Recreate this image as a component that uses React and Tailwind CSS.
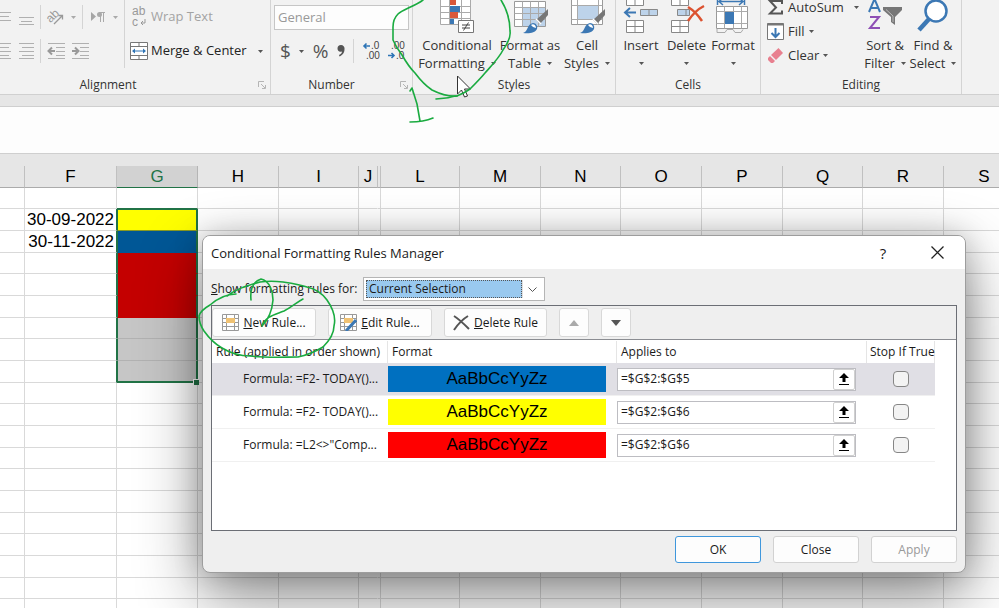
import React, { useState } from 'react';
import clsx from 'clsx';

const COLUMNS = [
  { name: '', width: 'w-[25px]' },
  { name: 'F', width: 'w-[92px]' },
  { name: 'G', width: 'w-[81px]' },
  { name: 'H', width: 'w-[81px]' },
  { name: 'I', width: 'w-[80px]' },
  { name: 'J', width: 'w-[19px]' },
  { name: '', width: 'w-[3px]' },
  { name: 'L', width: 'w-[79px]' },
  { name: 'M', width: 'w-[81px]' },
  { name: 'N', width: 'w-[80px]' },
  { name: 'O', width: 'w-[81px]' },
  { name: 'P', width: 'w-[81px]' },
  { name: 'Q', width: 'w-[80px]' },
  { name: 'R', width: 'w-[81px]' },
  { name: 'S', width: 'w-[81px]' },
];

const DATES = { 1: '30-09-2022', 2: '30-11-2022' };

// Fill of the selected G cells, by row index
const FILLS = {
  1: 'bg-[#ffff00] border-b-[#8a9a20]',
  2: 'bg-[#005796] border-b-[#005796]',
  3: 'bg-[#c40000] border-b-[#c40000]',
  4: 'bg-[#c40000] border-b-[#c40000]',
  5: 'bg-[#c40000] border-b-[#c40000]',
  6: 'bg-[#c6c6c6] border-b-[#b2b2b2]',
  7: 'bg-[#c6c6c6] border-b-[#b2b2b2]',
  8: 'bg-[#c6c6c6]',
};

const RULES = [
  { text: 'Formula: =F2- TODAY()...', color: 'bg-[#0070c0]', range: '=$G$2:$G$5' },
  { text: 'Formula: =F2- TODAY()...', color: 'bg-[#ffff00]', range: '=$G$2:$G$6' },
  { text: 'Formula: =L2<>"Comp...', color: 'bg-[#ff0000]', range: '=$G$2:$G$6' },
];

const Caret = ({ className = 'text-[#555]' }) => (
  <svg width="5" height="3" viewBox="0 0 5 3" className={clsx('shrink-0', className)}>
    <path d="M0 0h5L2.500 3z" fill="currentColor" />
  </svg>
);

const Lines = ({ rows }) => (
  <svg width="16" height="18" viewBox="0 0 16 18" className="shrink-0" stroke="#b0b0b0">
    {rows.map(([y, x1, x2]) => (
      <path key={y} d={`M${x1} ${y}H${x2}`} />
    ))}
  </svg>
);

const IndentIcon = ({ right }) => (
  <svg width="18" height="18" viewBox="0 0 18 18" className="shrink-0" stroke="#b0b0b0" fill="none">
    <path d="M1 1.500h17M9 5.500h9M9 9.500h9M9 13.500h9M1 16.500h17" />
    {right
      ? <path d="M1 9h5M4 5.500L7.500 9 4 12.500" stroke="#999" strokeWidth="2" />
      : <path d="M2 9h6M5 5.500L1.500 9 5 12.500" stroke="#999" strokeWidth="2" />}
  </svg>
);

const OrientationIcon = () => (
  <svg width="18" height="18" viewBox="0 0 18 18" className="shrink-0 overflow-visible">
    <text x="0" y="11" fontSize="12" fill="#999" fontFamily="Liberation Sans, sans-serif" transform="rotate(-45 7 9)">ab</text>
    <path d="M7 16L15 8M15.500 11.500V7.500H11.500" stroke="#999" strokeWidth="1.300" fill="none" />
  </svg>
);

const DirectionIcon = () => (
  <svg width="18" height="18" viewBox="0 0 18 18" className="shrink-0">
    <path d="M2 4l5 4.500L2 13z" fill="#a6a6a6" />
    <path d="M11.500 4v10M14.500 4v10M10 4.500h6" stroke="#aaa" fill="none" />
    <circle cx="10.500" cy="6.500" r="2.500" fill="#aaa" />
  </svg>
);

const WrapIcon = () => (
  <svg width="18" height="20" viewBox="0 0 18 20" className="shrink-0 overflow-visible" fontFamily="Liberation Sans, sans-serif" fontSize="12" fill="#999">
    <text x="2" y="8">ab</text>
    <text x="2" y="19">c</text>
    <path d="M15 12v4h-4M13 14l-2 2 2 2" stroke="#999" fill="none" />
  </svg>
);

const MergeIcon = () => (
  <svg width="18" height="18" viewBox="0 0 18 18" className="shrink-0" fill="none">
    <path d="M.5.5h17v17H.5zM.5 4.500h17M.5 13.500h17M9 .5v4M9 13.500v4" fill="#fff" stroke="#777" />
    <path d="M3 9h12" stroke="#2e75b6" />
    <path d="M5 6.500v5L2 9zM13 6.500v5L16 9z" fill="#2e75b6" />
  </svg>
);

const DecimalIcon = ({ decrease }) => (
  <svg width="17" height="18" viewBox="0 0 17 18" className="shrink-0 overflow-visible" fontFamily="Liberation Sans, sans-serif" fontSize="10" fill="#444">
    {decrease ? (
      <>
        <text x="3" y="7">.00</text>
        <text x="8" y="17">.0</text>
        <path d="M0 13.500h6M3.500 11L6 13.500 3.500 16" stroke="#2e75b6" strokeWidth="1.600" fill="none" />
      </>
    ) : (
      <>
        <text x="8" y="7">.0</text>
        <text x="3" y="17">.00</text>
        <path d="M7 4H1M3.500 1.500L1 4 3.500 6.500" stroke="#2e75b6" strokeWidth="1.600" fill="none" />
      </>
    )}
  </svg>
);

const ConditionalIcon = () => (
  <svg width="36" height="34" viewBox="0 0 36 34">
    <path d="M1.500-6v30.500h30V-6M1.500 6.500h30M1.500 12.500h30M1.500 18.500h30M10.500 0v24M22.500 0v24" fill="#fff" stroke="#aaa" />
    <path d="M11 0h6v5h-6zM11 12h8v6h-8z" fill="#d9583a" />
    <path d="M11 6h10v6H11zM11 19h4v5h-4z" fill="#3c78b4" />
    <path d="M19.500 20.500h15v12h-15z" fill="#fff" stroke="#777" />
    <path d="M23 25h8M23 28h8M29.500 22.500l-5 8" stroke="#444" fill="none" />
  </svg>
);

const Brush = () => (
  <>
    <path d="M34 9v6l-8 9-4-4z" fill="#777" />
    <path d="M22 19l5 5" stroke="#fff" strokeWidth="1.500" />
    <path d="M9 33c5-1 4-9 10-10 3 0 5 3 4 6-2 4-8 5-14 4z" fill="#3c78b4" />
    <path d="M17 25c2-2 5 0 5 3l-3-1z" fill="#fff" />
  </>
);

const TableIcon = () => (
  <svg width="36" height="34" viewBox="-2 0 36 34">
    <path d="M.5 1.500h31v25H.5z" fill="#fff" stroke="#999" />
    <path d="M9 8h22v18H9z" fill="#bdd3ea" />
    <path d="M.5 7.500h31M.5 13.500h31M.5 19.500h31M8.500 1.500v25M16.500 1.500v25M24.500 1.500v25" stroke="#aaa" fill="none" />
    <Brush />
  </svg>
);

const CellIcon = () => (
  <svg width="36" height="34" viewBox="-2 0 36 34">
    <path d="M.5-4v28.500h31V-4" fill="#fff" stroke="#999" />
    <path d="M7 6h20v13H7z" fill="#bdd3ea" />
    <path d="M.5 5.500h31M.5 19.500h31M6.500 0v24.500M27.500 0v24.500" stroke="#aaa" fill="none" />
    <Brush />
  </svg>
);

const InsertIcon = () => (
  <svg width="36" height="34" viewBox="0 0 36 34" fill="none">
    <path d="M3.500-3v8.500h17V-3M12 0v5.500M3.500 20.500h17v12h-17zM12 20.500v12M3.500 26.500h17" fill="#fff" stroke="#888" />
    <path d="M17.500 9.500h17v6h-17zM26 9.500v6" fill="#bdd3ea" stroke="#888" />
    <path d="M13 12.500H2M7 8l-5 4.500L7 17" stroke="#3c78b4" strokeWidth="2" />
  </svg>
);

const DeleteIcon = () => (
  <svg width="36" height="34" viewBox="0 0 36 34" fill="none">
    <path d="M2.500-3v8.500h17V-3M11 0v5.500M2.500 20.500h17v12h-17zM11 20.500v12M2.500 26.500h17" fill="#fff" stroke="#888" />
    <path d="M8.500 9.500h12v6h-12zM17 9.500v6" fill="#bdd3ea" stroke="#888" />
    <path d="M19 7c5 3 10 8 14 14M35 6c-6 3-12 9-16 15" stroke="#dc5230" strokeWidth="2.500" />
  </svg>
);

const FormatIcon = () => (
  <svg width="36" height="34" viewBox="0 0 36 34" fill="none">
    <path d="M4 1.500h24M8-2L4 1.500 8 5M24-2l4 3.500L24 5M2.500 0v5M29.500 0v5" stroke="#3c78b4" strokeWidth="1.500" />
    <path d="M1.500 6.500h31v22h-31z" fill="#fff" stroke="#999" />
    <path d="M1.500 11.500h31M1.500 23.500h31M9.500 6.500v22M18.500 6.500v5M18.500 23.500v5M26.500 6.500v22M2 29v3.500h8l2-3h6l2 3h6l2-3" stroke="#aaa" />
    <path d="M10 12h9v12h-9z" fill="#3c78b4" />
  </svg>
);

const SortIcon = () => (
  <svg width="36" height="34" viewBox="0 0 36 34" fill="none">
    <path d="M2 12L7.500-1 13 12M4 8h7" stroke="#3c78b4" strokeWidth="2" />
    <path d="M3 17h9L3 28h10" stroke="#8e4fb5" strokeWidth="2" />
    <path d="M16 7h19v3l-7 7v8l-4-3v-5l-8-7z" fill="#777" />
    <path d="M19 9.500l7 6.500v6" stroke="#bbb" />
  </svg>
);

const FindIcon = () => (
  <svg width="36" height="34" viewBox="0 0 36 34">
    <path d="M14 19L4 30" stroke="#3c78b4" strokeWidth="4.500" />
    <circle cx="21" cy="11" r="10.500" fill="#fff" stroke="#3c78b4" strokeWidth="2.500" />
  </svg>
);

const SumIcon = () => (
  <svg width="17" height="17" viewBox="0 0 17 17">
    <path d="M15 5V2H3l6 6.500-6 6h12v-3" fill="none" stroke="#555" strokeWidth="2" />
  </svg>
);

const FillIcon = () => (
  <svg width="17" height="17" viewBox="0 0 17 17">
    <path d="M.5.500h16v16H.5z" fill="#fff" stroke="#777" />
    <path d="M.5 1.500h16" stroke="#777" strokeWidth="2" />
    <path d="M8.500 5v9M4.500 10l4 4 4-4" fill="none" stroke="#3c78b4" strokeWidth="2" />
  </svg>
);

const EraserIcon = () => (
  <svg width="17" height="17" viewBox="0 0 17 17">
    <path d="M11.500 1l4.500 5-7 7-5-5z" fill="#e8808f" />
    <path d="M3 9l5 5-2 2H4l-3-3v-2z" fill="#e8808f" />
  </svg>
);

const LauncherIcon = () => (
  <svg width="8" height="8" viewBox="0 0 8 8" fill="none" stroke="#b5b5b5">
    <path d="M.5 6V.5H6M3 3l4 4M7.500 4v3.500H4" />
  </svg>
);

const RuleIcon = ({ pencil }) => (
  <svg width="17" height="17" viewBox="0 0 17 17" fill="none">
    <path d="M.5.500h16v16H.5zM.5 4.500h16M.5 8.500h16M.5 12.500h16M4.500.5v16M12.500.5v16" fill="#fff" stroke="#999" />
    <path d="M4 4h9v5H4z" fill="#f0c273" />
    {pencil && <path d="M6 17L16 6" stroke="#3c78b4" strokeWidth="3" />}
  </svg>
);

const RibbonGroup = ({ label, launcher, className, labelClassName, children }) => (
  <section className={clsx('flex shrink-0 flex-col border-r border-[#d4d4d4]', className)} aria-label={label}>
    <div className="flex h-[76px]">{children}</div>
    <div className="flex h-[18px] items-center px-1 text-[12px] leading-[18px] text-[#333]">
      <span className="w-2" />
      <span className={clsx('flex-1 text-center', labelClassName)}>{label}</span>
      <span className="w-2">{launcher && <LauncherIcon />}</span>
    </div>
  </section>
);

const BigButton = ({ icon, first, second, className }) => (
  <button className={clsx('flex shrink-0 flex-col items-center whitespace-nowrap text-[13px] leading-[18px] text-[#333]', className)}>
    <span className="flex h-9 items-start">{icon}</span>
    <span>{first}</span>
    <span className="flex h-[18px] items-center gap-1.5">
      {second}
      <Caret />
    </span>
  </button>
);

const SmallButton = ({ icon, label, gap }) => (
  <button className="flex h-6 items-center gap-1 whitespace-nowrap text-[13px] leading-4 text-[#333]">
    {icon}
    <span>{label}</span>
    <Caret className={clsx('text-[#555]', gap)} />
  </button>
);

const Separator = () => <span className="h-6 w-px shrink-0 bg-[#d4d4d4]" />;

const Ribbon = () => (
  <header className="flex h-[95px] overflow-hidden border-b border-[#d0d0d0] bg-[#f2f2f2]">
    <RibbonGroup label="Alignment" launcher className="-ml-[54px] w-[325px]">
      <div className="ml-[50px] flex h-[68px] flex-col border-r border-[#d4d4d4] pr-1.5">
        <div className="flex h-[34px] items-center gap-1.5">
          <Lines rows={[[4.5, 0, 15], [8.5, 2, 13], [12.5, 0, 15]]} />
          <Lines rows={[[9.5, 1, 16], [13.5, 3, 14], [16.5, 1, 16]]} />
          <Separator />
          <OrientationIcon />
          <Caret className="text-[#aaa]" />
          <Separator />
          <DirectionIcon />
          <Caret className="text-[#aaa]" />
        </div>
        <div className="flex h-[34px] items-center gap-1.5">
          <Lines rows={[[1.5, 0, 15], [5.5, 2, 13], [9.5, 0, 15], [13.5, 2, 13], [16.5, 0, 15]]} />
          <Lines rows={[[1.5, 1, 16], [5.5, 4, 16], [9.5, 1, 16], [13.5, 4, 16], [16.5, 1, 16]]} />
          <Separator />
          <IndentIcon />
          <IndentIcon right />
        </div>
      </div>
      <div className="ml-[5px] flex flex-col text-[13px]">
        <button className="flex h-[34px] items-center gap-[3px] text-[#a3a3a3]">
          <WrapIcon />
          Wrap Text
        </button>
        <button className="flex h-[34px] items-center gap-[3px] whitespace-nowrap text-[#222]">
          <MergeIcon />
          Merge &amp; Center
          <Caret className="ml-2 text-[#555]" />
        </button>
      </div>
    </RibbonGroup>

    <RibbonGroup label="Number" launcher className="w-[142px]" labelClassName="pr-5">
      <div className="flex flex-1 flex-col px-[3px]">
        <div className="flex h-[34px] items-center">
          <select aria-label="Number format" className="h-[25px] w-full appearance-none border border-[#c6c6c6] bg-[#fdfdfd] px-[3px] text-[13px] leading-[22px] text-[#999]">
            <option>General</option>
          </select>
        </div>
        <div className="flex h-[34px] items-center justify-between pr-1 pl-1.5 text-[19px] leading-[24px] text-[#555]">
          <button>$</button>
          <Caret />
          <button>%</button>
          <button aria-label="Comma style">
            <svg width="8" height="12" viewBox="0 0 8 12" fill="#555">
              <path d="M4 0a3.500 3.500 0 0 1 3.500 4c0 4-2 6-5 7.500L2 10c2-1 3-2 3-3.500C2 7.500.5 5.500.5 3.500A3.500 3.500 0 0 1 4 0z" />
            </svg>
          </button>
          <Separator />
          <button aria-label="Increase decimal"><DecimalIcon /></button>
          <button aria-label="Decrease decimal"><DecimalIcon decrease /></button>
        </div>
      </div>
    </RibbonGroup>

    <RibbonGroup label="Styles" className="w-[203px]">
      <BigButton icon={<ConditionalIcon />} first="Conditional" second="Formatting" className="ml-1 w-[80px]" />
      <BigButton icon={<TableIcon />} first="Format as" second="Table" className="ml-0.5 w-[62px]" />
      <BigButton icon={<CellIcon />} first="Cell" second="Styles" className="w-[52px]" />
    </RibbonGroup>

    <RibbonGroup label="Cells" className="w-[145px]">
      <BigButton icon={<InsertIcon />} first="Insert" className="ml-0.5 w-[46px]" />
      <BigButton icon={<DeleteIcon />} first="Delete" className="w-[45px]" />
      <BigButton icon={<FormatIcon />} first="Format" className="w-[48px]" />
    </RibbonGroup>

    <RibbonGroup label="Editing" className="w-[201px]">
      <div className="-mt-[5px] ml-1.5 flex w-[94px] flex-col">
        <SmallButton icon={<SumIcon />} label="AutoSum" gap="ml-1.5" />
        <SmallButton icon={<FillIcon />} label="Fill" />
        <SmallButton icon={<EraserIcon />} label="Clear" />
      </div>
      <BigButton icon={<SortIcon />} first="Sort &amp;" second="Filter" className="w-[48px]" />
      <BigButton icon={<FindIcon />} first="Find &amp;" second="Select" className="w-[48px]" />
    </RibbonGroup>
  </header>
);

const Sheet = () => (
  <main className="flex-1 overflow-hidden">
    <table className="w-[1025px] table-fixed border-separate border-spacing-0 font-['Liberation_Sans',Arial,sans-serif] text-[17px] leading-5">
      <thead>
        <tr className="h-[22px] bg-[#e6e6e6]">
          {COLUMNS.map((col, i) => (
            <th
              key={i}
              className={clsx(
                'border-r border-b p-0 text-center font-normal',
                col.width,
                col.name === 'G' ? 'border-r-[#b5b5b5] border-b-[#217346] bg-[#d2d2d2] text-[#217346]' : 'border-r-[#c0c0c0] border-b-[#ababab] text-black',
              )}
            >
              {col.name}
            </th>
          ))}
        </tr>
      </thead>
      <tbody>
        {Array.from({ length: 20 }, (_, row) => (
          <tr key={row} className={row % 3 === 2 ? 'h-[22px]' : row % 3 === 0 ? 'h-[21px]' : 'h-[22px]'}>
            {COLUMNS.map((col, i) => {
              const inRange = row > 0 && row < 9;
              const selected = col.name === 'G' && inRange;
              return (
                <td
                  key={i}
                  className={clsx(
                    'border-b p-0 text-right whitespace-nowrap',
                    selected ? 'border-r-2' : 'border-r',
                    !selected && !(col.name === 'G' && row === 0) && 'border-b-[#d9d9d9]',
                    col.name === 'F' && 'pr-0.5',
                    selected || (col.name === 'F' && inRange) ? 'border-r-[#217346]' : col.name === 'J' ? 'border-r-transparent' : 'border-r-[#d9d9d9]',
                    col.name === 'G' && row === 0 && 'border-b-[#217346]',
                    selected && 'relative border-l border-l-[#217346]',
                    selected && FILLS[row],
                    selected && row === 1 && 'border-t border-t-[#217346]',
                    selected && row === 8 && 'border-b-2 border-b-[#217346]',
                  )}
                >
                  {col.name === 'F' && DATES[row]}
                  {selected && row === 8 && (
                    <span className="absolute -right-[3px] -bottom-1 size-[6px] border-t border-l border-white bg-[#217346]" />
                  )}
                </td>
              );
            })}
          </tr>
        ))}
      </tbody>
    </table>
  </main>
);

const ToolButton = ({ label, className, disabled, children }) => (
  <button
    aria-label={label}
    disabled={disabled}
    className={clsx('flex h-[29px] shrink-0 items-center justify-center gap-1 rounded-[3px] border border-[#d8d8d8] bg-[#fdfdfd] whitespace-nowrap', className)}
  >
    {children}
  </button>
);

const DialogButton = ({ className, children, ...rest }) => (
  <button className={clsx('h-[27px] w-[86px] rounded-[3px] border bg-[#fdfdfd]', className)} {...rest}>
    {children}
  </button>
);

const RulesManager = () => {
  const [ranges, setRanges] = useState(RULES.map((rule) => rule.range));

  const handleRangeChange = (index, value) => {
    setRanges(ranges.map((range, i) => (i === index ? value : range)));
  };

  return (
    <div
      role="dialog"
      aria-labelledby="dialog-title"
      className="absolute top-[235px] left-[202px] w-[764px] overflow-hidden rounded-[8px] border border-[#9d9d9d] bg-[#efefef] text-[12px] leading-4 text-[#1a1a1a] shadow-[0_0_30px_rgba(0,0,0,0.2),0_24px_64px_rgba(0,0,0,0.45)]"
    >
      <div className="flex h-[33px] items-center bg-white pr-5 pl-2">
        <h1 id="dialog-title" className="flex-1 text-[13px]">Conditional Formatting Rules Manager</h1>
        <button className="w-9 text-[15px]" aria-label="Help">?</button>
        <button className="ml-7 flex w-4 justify-center" aria-label="Close window">
          <svg width="13" height="13" viewBox="0 0 13 13" stroke="#222" strokeWidth="1.300">
            <path d="M.5.500l12 12M12.500.5l-12 12" />
          </svg>
        </button>
      </div>

      <div className="flex h-9 items-center pt-1 pl-2">
        <label htmlFor="rules-for" className="w-[152px] whitespace-nowrap"><u>S</u>how formatting rules for:</label>
        <div className="flex h-6 w-[182px] border border-[#b5b5b5] bg-white p-0.5">
          <select id="rules-for" className="min-w-0 flex-1 appearance-none border border-dotted border-[#555] bg-[#99c9ef] px-0.5 leading-4">
            <option>Current Selection</option>
          </select>
          <span className="flex w-5 items-center justify-center border-l border-[#e0e0e0]">
            <svg width="9" height="5" viewBox="0 0 9 5" fill="none" stroke="#555">
              <path d="M.5.500l4 4 4-4" />
            </svg>
          </span>
        </div>
      </div>

      <div className="mx-2 flex h-[226px] flex-col border border-[#6b6e75] bg-white">
        <div className="flex h-[34px] shrink-0 items-center gap-3 border-b border-[#8b8d92] bg-[#efefef]">
          <ToolButton className="w-[104px]">
            <RuleIcon />
            <span><u>N</u>ew Rule...</span>
          </ToolButton>
          <ToolButton className="w-[104px]">
            <RuleIcon pencil />
            <span><u>E</u>dit Rule...</span>
          </ToolButton>
          <ToolButton className="w-[103px]">
            <svg width="17" height="16" viewBox="0 0 17 16" stroke="#555" strokeWidth="2" fill="none">
              <path d="M1 1c5 3 11 9 15 13M15 1C10 4 5 9 1 15" />
            </svg>
            <span><u>D</u>elete Rule</span>
          </ToolButton>
          <ToolButton label="Move up" disabled className="w-[30px]">
            <svg width="10" height="6" viewBox="0 0 10 6"><path d="M0 6h10L5 0z" fill="#aaa" /></svg>
          </ToolButton>
          <ToolButton label="Move down" className="w-[30px]">
            <svg width="10" height="6" viewBox="0 0 10 6"><path d="M0 0h10L5 6z" fill="#555" /></svg>
          </ToolButton>
        </div>

        <table className="mt-px w-[723px] table-fixed border-separate border-spacing-0">
          <thead>
            <tr className="h-[22px] text-left">
              <th className="w-[176px] border-r border-[#e5e5e5] p-0 pl-1 font-normal whitespace-nowrap">Rule (applied in order shown)</th>
              <th className="w-[229px] border-r border-[#e5e5e5] p-0 pl-1 font-normal">Format</th>
              <th className="w-[250px] border-r border-[#e5e5e5] p-0 pl-1 font-normal">Applies to</th>
              <th className="border-r border-[#e5e5e5] p-0 pl-[3px] font-normal whitespace-nowrap">Stop If True</th>
            </tr>
          </thead>
          <tbody>
            {RULES.map((rule, i) => (
              <tr key={i} className={i === 0 ? 'h-[33px] bg-[#e0dfe5]' : 'h-[33px]'}>
                <td className="border-b border-[#f0f0f0] p-0 pl-[31px] whitespace-nowrap">{rule.text}</td>
                <td className="border-b border-[#f0f0f0] p-0 pr-[11px]">
                  <div className={clsx("flex h-[26px] items-center justify-center font-['Liberation_Sans',Arial,sans-serif] text-[17px] text-black", rule.color)}>
                    AaBbCcYyZz
                  </div>
                </td>
                <td className="border-b border-[#f0f0f0] p-0 pr-[11px]">
                  <div className="flex h-[23px] border border-[#bdbdc2] bg-white">
                    <input
                      aria-label={`Applies to, rule ${i + 1}`}
                      value={ranges[i]}
                      onChange={(e) => handleRangeChange(i, e.target.value)}
                      className="min-w-0 flex-1 px-[3px]"
                    />
                    <button aria-label="Select range" className="flex w-[22px] items-center justify-center rounded-[2px] border border-[#d0d0d0]">
                      <svg width="10" height="12" viewBox="0 0 10 12">
                        <path d="M5 0l5 5H6.500v4h-3V5H0z" fill="#000" />
                        <path d="M0 11.500h10" stroke="#000" />
                      </svg>
                    </button>
                  </div>
                </td>
                <td className="border-b border-[#f0f0f0] p-0 text-center">
                  <input
                    type="checkbox"
                    aria-label={`Stop if true, rule ${i + 1}`}
                    className="inline-block size-4 appearance-none rounded-[4px] border border-[#868686] bg-[#f3f3f3] align-middle"
                  />
                </td>
              </tr>
            ))}
          </tbody>
        </table>
      </div>

      <div className="flex justify-end gap-3 pt-[5px] pr-2 pb-[9px]">
        <DialogButton className="border-[#3f97dc]">OK</DialogButton>
        <DialogButton className="border-[#d2d2d2]">Close</DialogButton>
        <DialogButton className="border-[#d2d2d2] text-[#999]" disabled>Apply</DialogButton>
      </div>
    </div>
  );
};

// Handwritten step marks and the mouse pointer, drawn over the window
const InkOverlay = () => (
  <svg className="pointer-events-none absolute inset-0 size-full" fill="none">
    <path d="M457.500 76v18l4-4 3 7 3-1-3-7h6z" fill="#fff" stroke="#333" />
    <g stroke="#1aab40" strokeWidth="1.600" strokeLinecap="round" strokeLinejoin="round">
      <path d="M423 0C415 6 402 10 398 14C394 18 393 22 393 27V40C396 47 399 51 402 55C406 62 410 68 415 73C421 81 426 86 432 90C440 94 448 97 457 96C462 94 466 92 470 89C475 84 480 79 485 73C492 65 499 58 503 50C508 43 511 37 510 31C510 20 506 8 501 0" />
      <path d="M457 96C452 96 450 98 446 98L436 99" />
      <path d="M410 91L412 88L417 104L420 121M410 122C418 122 426 121 433 118" />
      <path d="M236 294C225 294 217 299 210 305C203 309 200 312 199 316C199 322 200 325 204 331C209 338 215 344 222 348C232 354 240 356 250 356C265 358 285 357 298 357C308 355 318 350 323 347C330 340 334 334 334 326C336 318 334 310 327 300C322 293 316 289 307 287C298 284 290 283 283 282C275 281 267 281 260 282C246 286 236 289 227 296" />
      <path d="M251 300C250 290 252 282 261 279C270 281 273 292 273 300C272 312 268 320 262 326C266 316 274 315 284 311C292 307 297 302 303 299" />
    </g>
  </svg>
);

const App = () => (
  <div className="relative flex h-screen w-full flex-col overflow-hidden bg-white font-['Open_Sans','Noto_Sans',sans-serif]">
    <Ribbon />
    <div className="h-3 shrink-0 border-b border-[#cfcfcf] bg-[#e6e6e6]" />
    <div className="h-[46px] shrink-0 bg-[#fdfdfd]" />
    <div className="h-[13px] shrink-0 border-t border-[#cfcfcf] bg-[#e6e6e6]" />
    <Sheet />
    <RulesManager />
    <InkOverlay />
  </div>
);

export default App;
